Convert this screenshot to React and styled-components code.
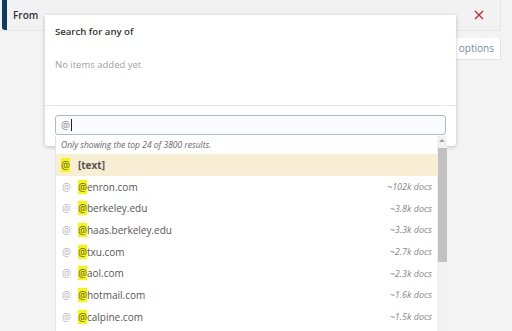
import React from "react";
import styled, { createGlobalStyle } from "styled-components";

const Global = createGlobalStyle`
  html, body { margin: 0; padding: 0; }
  body {
    background: #f3f3f3;
    font-family: "Open Sans", "Noto Sans", sans-serif;
    width: 512px; height: 331px; overflow: hidden;
  }
`;

const Page = styled.div`
  position: relative;
  width: 512px;
  height: 331px;
  overflow: hidden;
`;

const FilterCard = styled.div`
  width: 500px;
  height: 30px;
  display: flex;
  align-items: center;
  background: #f2f2f2;
  border-right: 1px solid #e6e6e6;
  border-bottom: 1px solid #e6e6e6;
`;

const Accent = styled.div`
  width: 5px;
  height: 30px;
  margin-left: 2px;
  background: #0b3c63;
  border-radius: 0 0 0 3px;
`;

const Label = styled.div`
  margin-left: 6px;
  font-size: 10px;
  font-weight: 600;
  color: #333;
  flex: 1;
`;

const Close = styled.div`
  width: 30px;
  display: flex;
  justify-content: center;
  margin-right: 6px;
`;

const OptionsRow = styled.div`
  width: 501px;
  display: flex;
  justify-content: flex-end;
  margin-top: 7px;
`;

const OptionsLink = styled.div`
  background: #fff;
  border-right: 1px solid #e4e4e4;
  border-bottom: 1px solid #e4e4e4;
  font-size: 10px;
  color: #6f8ea8;
  padding: 4px 6px 5px 6px;
  line-height: 12px;
`;

const Popover = styled.div`
  position: absolute;
  left: 45px;
  top: 15px;
  width: 411px;
  height: 131px;
  background: #fff;
  box-shadow: 0 1px 4px rgba(0, 0, 0, 0.22);
  border-radius: 0 0 3px 3px;
  display: flex;
  flex-direction: column;
`;

const Header = styled.div`
  padding: 10px 10px 0;
  height: 80px;
  border-bottom: 1px solid #e8e8e8;
`;

const Title = styled.div`
  font-size: 9.6px;
  font-weight: 600;
  color: #333;
  line-height: 13px;
`;

const Empty = styled.div`
  margin-top: 20px;
  font-size: 9.5px;
  color: #a0a0a0;
  line-height: 13px;
`;

const InputWrap = styled.div`
  position: relative;
  padding: 9px 10px 0;
`;

const Input = styled.div`
  height: 18px;
  border: 1px solid #a9bccb;
  border-radius: 3px;
  background: #f9fbfc;
  display: flex;
  align-items: center;
  padding-left: 5px;
  font-size: 10px;
  color: #888;
`;

const Caret = styled.span`
  display: inline-block;
  width: 1px;
  height: 12px;
  background: #222;
  margin-left: 1px;
`;

const ListBox = styled.div`
  position: absolute;
  left: 10px;
  top: 30px;
  width: 391px;
  height: 220px;
  background: #fff;
  border-left: 1px solid #e2e2e2;
  display: flex;
`;

const List = styled.div`
  flex: 1;
  display: flex;
  flex-direction: column;
`;

const Notice = styled.div`
  flex-shrink: 0;
  font-size: 8.5px;
  font-style: italic;
  color: #666;
  padding: 3px 0 0 5px;
  height: 15px;
  line-height: 12px;
`;

const Row = styled.div`
  flex-shrink: 0;
  height: 21.7px;
  display: flex;
  align-items: center;
  padding: 0 5px;
  background: ${(p) => (p.$active ? "#f8eed3" : "transparent")};
`;

const AtIcon = styled.span`
  width: 16px;
  font-size: 10px;
  color: #b5b5b5;
  margin-left: 1px;
`;

const Mark = styled.span`
  background: #f7f700;
  font-weight: 400;
`;

const Name = styled.span`
  flex: 1;
  font-size: 10px;
  color: #555;
  font-weight: ${(p) => (p.$bold ? 700 : 400)};
`;

const Spaced = styled.span`
  margin-left: 8px;
`;

const Count = styled.span`
  font-size: 9px;
  font-style: italic;
  color: #888;
`;

const Scrollbar = styled.div`
  width: 10px;
  background: #f1f1f1;
  display: flex;
  flex-direction: column;
  align-items: center;
`;

const Arrow = styled.div`
  margin-top: 3px;
  width: 0;
  height: 0;
  border-left: 3px solid transparent;
  border-right: 3px solid transparent;
  border-bottom: 3px solid #a3a3a3;
`;

const Thumb = styled.div`
  margin-top: 6px;
  width: 9px;
  height: 114px;
  background: #c1c1c1;
`;

const rows = [
  ["enron.com", "~102k docs"],
  ["berkeley.edu", "~3.8k docs"],
  ["haas.berkeley.edu", "~3.3k docs"],
  ["txu.com", "~2.7k docs"],
  ["aol.com", "~2.3k docs"],
  ["hotmail.com", "~1.6k docs"],
  ["calpine.com", "~1.5k docs"],
];

export default function App() {
  return (
    <Page>
      <Global />
      <FilterCard>
        <Accent />
        <Label>From</Label>
        <Close>
          <svg width="10" height="10" viewBox="0 0 10 10">
            <path d="M1 1L9 9M9 1L1 9" stroke="#c0262b" strokeWidth="1.3" />
          </svg>
        </Close>
      </FilterCard>
      <OptionsRow>
        <OptionsLink>More options</OptionsLink>
      </OptionsRow>
      <Popover>
        <Header>
          <Title>Search for any of</Title>
          <Empty>No items added yet</Empty>
        </Header>
        <InputWrap>
          <Input>
            @<Caret />
          </Input>
          <ListBox>
            <List>
              <Notice>Only showing the top 24 of 3800 results.</Notice>
              <Row $active>
                <Name $bold>
                  <Mark>@</Mark>
                  <Spaced>[text]</Spaced>
                </Name>
              </Row>
              {rows.map(([d, c]) => (
                <Row key={d}>
                  <AtIcon>@</AtIcon>
                  <Name>
                    <Mark>@</Mark>
                    {d}
                  </Name>
                  <Count>{c}</Count>
                </Row>
              ))}
            </List>
            <Scrollbar>
              <Arrow />
              <Thumb />
            </Scrollbar>
          </ListBox>
        </InputWrap>
      </Popover>
    </Page>
  );
}
